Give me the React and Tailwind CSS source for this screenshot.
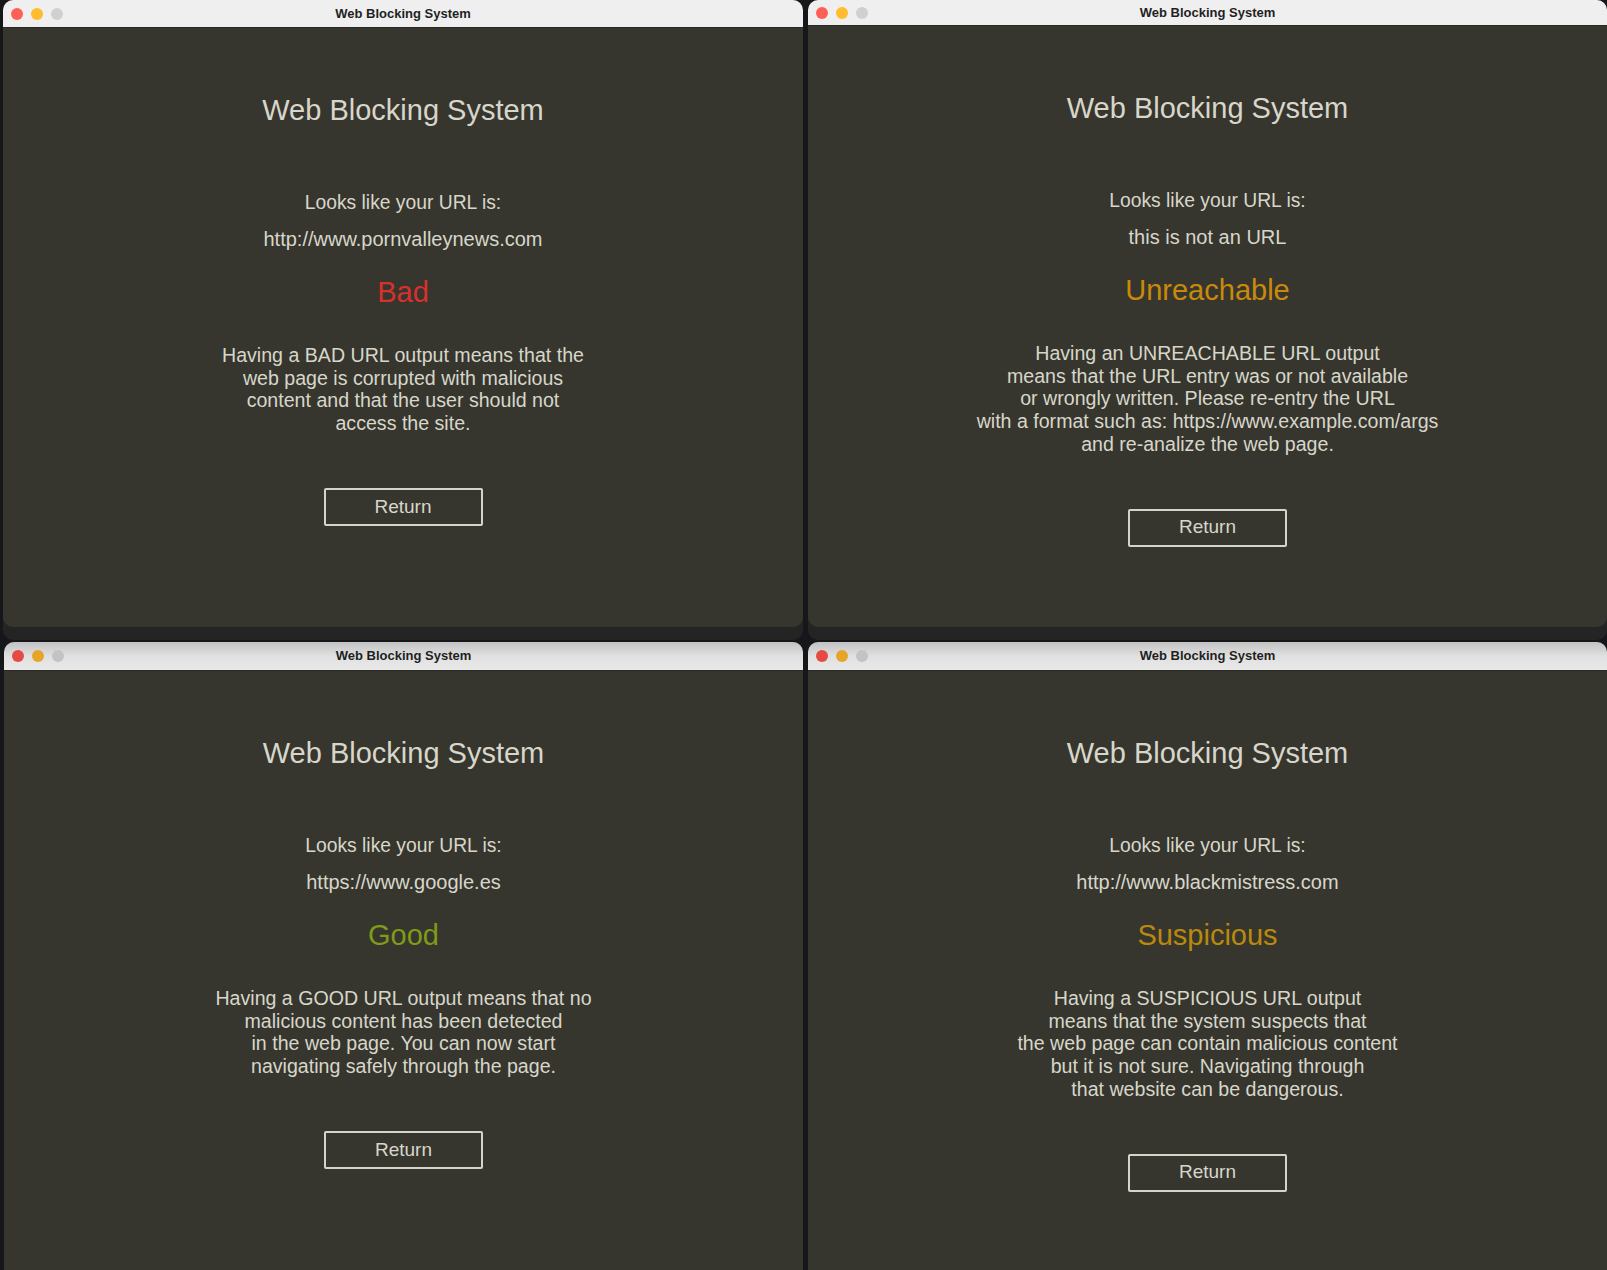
import React from 'react';

const font = { fontFamily: '"Liberation Sans", Arial, sans-serif' };

const panels = [
  {
    url: 'http://www.pornvalleynews.com',
    status: 'Bad',
    color: 'text-[#d8302c]',
    lines: [
      'Having a BAD URL output means that the',
      'web page is corrupted with malicious',
      'content and that the user should not',
      'access the site.',
    ],
  },
  {
    url: 'this is not an URL',
    status: 'Unreachable',
    color: 'text-[#c98a0c]',
    lines: [
      'Having an UNREACHABLE URL output',
      'means that the URL entry was or not available',
      'or wrongly written. Please re-entry the URL',
      'with a format such as: https://www.example.com/args',
      'and re-analize the web page.',
    ],
  },
  {
    url: 'https://www.google.es',
    status: 'Good',
    color: 'text-[#7f9b19]',
    lines: [
      'Having a GOOD URL output means that no',
      'malicious content has been detected',
      'in the web page. You can now start',
      'navigating safely through the page.',
    ],
  },
  {
    url: 'http://www.blackmistress.com',
    status: 'Suspicious',
    color: 'text-[#b9890d]',
    lines: [
      'Having a SUSPICIOUS URL output',
      'means that the system suspects that',
      'the web page can contain malicious content',
      'but it is not sure. Navigating through',
      'that website can be dangerous.',
    ],
  },
];

function TitleBar({ dim, height }) {
  return (
    <div
      className={`grid grid-cols-[1fr_auto_1fr] items-center rounded-t-[10px] border-b border-[#2a2a24] px-2 ${height} ${
        dim ? 'bg-gradient-to-b from-[#c2c2c2] via-[#e0e0e0] to-[#e9e9e9]' : 'bg-[#efefef]'
      }`}
    >
      <div className="flex items-center gap-2">
        <span className={`h-3 w-3 rounded-full ${dim ? 'bg-[#e44b45]' : 'bg-[#fe5f57]'}`} />
        <span className={`h-3 w-3 rounded-full ${dim ? 'bg-[#e5a528]' : 'bg-[#febc2e]'}`} />
        <span className={`h-3 w-3 rounded-full ${dim ? 'bg-[#c3c3c3]' : 'bg-[#d0d0d0]'}`} />
      </div>
      <span className="text-[13px] font-semibold text-[#1f1f1f]" style={font}>
        Web Blocking System
      </span>
      <div />
    </div>
  );
}

function Content({ p }) {
  return (
    <div className="flex flex-col items-center text-center text-[#d8d6ca]" style={font}>
      <h1 className="mt-[64px] text-[29px] leading-[36px]">Web Blocking System</h1>
      <p className="mt-[63px] text-[19.3px] leading-[24px]">Looks like your URL is:</p>
      <p className="mt-[12px] text-[20px] leading-[24px]">{p.url}</p>
      <p className={`mt-[23px] text-[29px] leading-[36px] ${p.color}`}>{p.status}</p>
      <div className="mt-[34px] text-[19.6px] leading-[22.7px]">
        {p.lines.map((l) => (
          <div key={l}>{l}</div>
        ))}
      </div>
      <button className="mt-[53px] flex h-[38px] w-[159px] items-center justify-center rounded-[2px] border-2 border-[#d6d4c8] text-[19px] text-[#d8d6ca]">
        Return
      </button>
    </div>
  );
}

function TopWindow({ p, className, bar }) {
  return (
    <div className={`flex h-[640px] flex-col rounded-[10px] bg-[#242424] ${className}`}>
      <TitleBar height={bar} />
      <div className="flex-1 rounded-b-[10px] bg-[#36362e]">
        <Content p={p} />
      </div>
      <div className="h-[13px]" />
    </div>
  );
}

function BottomWindow({ p, className }) {
  return (
    <div className={`flex h-[628px] flex-col rounded-t-[10px] bg-[#36362e] ${className}`}>
      <TitleBar dim height="h-[29px]" />
      <div className="flex-1">
        <Content p={p} />
      </div>
    </div>
  );
}

export default function App() {
  return (
    <div className="flex h-[1270px] w-[1607px] flex-col overflow-hidden bg-[#15171b]">
      <div className="flex">
        <TopWindow p={panels[0]} bar="h-[28px]" className="ml-[3px] w-[800px]" />
        <TopWindow p={panels[1]} bar="h-[26px]" className="ml-[5px] flex-1" />
      </div>
      <div className="mt-[2px] flex">
        <BottomWindow p={panels[2]} className="ml-[4px] w-[799px]" />
        <BottomWindow p={panels[3]} className="ml-[5px] flex-1" />
      </div>
    </div>
  );
}
